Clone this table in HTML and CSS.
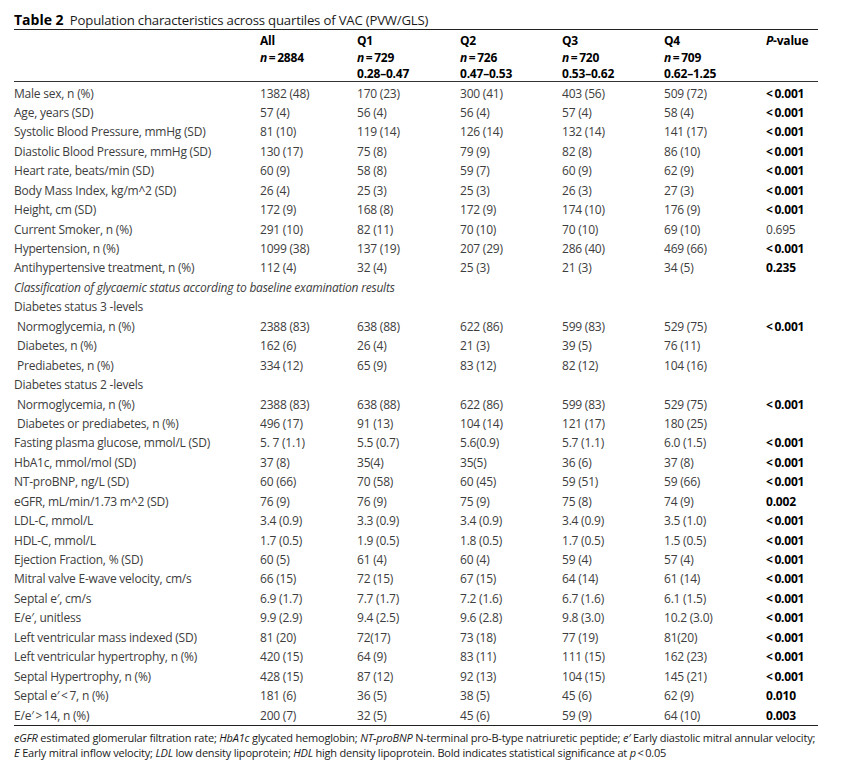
FILE: index.html
```html
<!DOCTYPE html>
<html lang="en">
<head>
<meta charset="utf-8">
<title>Table 2</title>
<link rel="stylesheet" href="styles.css">
</head>
<body>
<div class="page">
  <div class="caption"><b>Table 2</b> Population characteristics across quartiles of VAC (PVW/GLS)</div>
  <div class="table">
    <div class="row head">
      <div></div>
      <div>All<br><i>n</i>&#8201;=&#8201;2884</div>
      <div>Q1<br><i>n</i>&#8201;=&#8201;729<br>0.28&ndash;0.47</div>
      <div>Q2<br><i>n</i>&#8201;=&#8201;726<br>0.47&ndash;0.53</div>
      <div>Q3<br><i>n</i>&#8201;=&#8201;720<br>0.53&ndash;0.62</div>
      <div>Q4<br><i>n</i>&#8201;=&#8201;709<br>0.62&ndash;1.25</div>
      <div><i>P</i>-value</div>
    </div>
    <div class="body">
      <div class="row"><div>Male sex, n (%)</div><div>1382 (48)</div><div>170 (23)</div><div>300 (41)</div><div>403 (56)</div><div>509 (72)</div><div class="p">&lt;&#8201;0.001</div></div>
      <div class="row"><div>Age, years (SD)</div><div>57 (4)</div><div>56 (4)</div><div>56 (4)</div><div>57 (4)</div><div>58 (4)</div><div class="p">&lt;&#8201;0.001</div></div>
      <div class="row"><div>Systolic Blood Pressure, mmHg (SD)</div><div>81 (10)</div><div>119 (14)</div><div>126 (14)</div><div>132 (14)</div><div>141 (17)</div><div class="p">&lt;&#8201;0.001</div></div>
      <div class="row"><div>Diastolic Blood Pressure, mmHg (SD)</div><div>130 (17)</div><div>75 (8)</div><div>79 (9)</div><div>82 (8)</div><div>86 (10)</div><div class="p">&lt;&#8201;0.001</div></div>
      <div class="row"><div>Heart rate, beats/min (SD)</div><div>60 (9)</div><div>58 (8)</div><div>59 (7)</div><div>60 (9)</div><div>62 (9)</div><div class="p">&lt;&#8201;0.001</div></div>
      <div class="row"><div>Body Mass Index, kg/m^2 (SD)</div><div>26 (4)</div><div>25 (3)</div><div>25 (3)</div><div>26 (3)</div><div>27 (3)</div><div class="p">&lt;&#8201;0.001</div></div>
      <div class="row"><div>Height, cm (SD)</div><div>172 (9)</div><div>168 (8)</div><div>172 (9)</div><div>174 (10)</div><div>176 (9)</div><div class="p">&lt;&#8201;0.001</div></div>
      <div class="row"><div>Current Smoker, n (%)</div><div>291 (10)</div><div>82 (11)</div><div>70 (10)</div><div>70 (10)</div><div>69 (10)</div><div>0.695</div></div>
      <div class="row"><div>Hypertension, n (%)</div><div>1099 (38)</div><div>137 (19)</div><div>207 (29)</div><div>286 (40)</div><div>469 (66)</div><div class="p">&lt;&#8201;0.001</div></div>
      <div class="row"><div>Antihypertensive treatment, n (%)</div><div>112 (4)</div><div>32 (4)</div><div>25 (3)</div><div>21 (3)</div><div>34 (5)</div><div class="p">0.235</div></div>
      <div class="row"><div class="span"><i>Classification of glycaemic status according to baseline examination results</i></div></div>
      <div class="row"><div class="span">Diabetes status 3 -levels</div></div>
      <div class="row"><div class="ind">Normoglycemia, n (%)</div><div>2388 (83)</div><div>638 (88)</div><div>622 (86)</div><div>599 (83)</div><div>529 (75)</div><div class="p">&lt;&#8201;0.001</div></div>
      <div class="row"><div class="ind">Diabetes, n (%)</div><div>162 (6)</div><div>26 (4)</div><div>21 (3)</div><div>39 (5)</div><div>76 (11)</div><div></div></div>
      <div class="row"><div class="ind">Prediabetes, n (%)</div><div>334 (12)</div><div>65 (9)</div><div>83 (12)</div><div>82 (12)</div><div>104 (16)</div><div></div></div>
      <div class="row"><div class="span">Diabetes status 2 -levels</div></div>
      <div class="row"><div class="ind">Normoglycemia, n (%)</div><div>2388 (83)</div><div>638 (88)</div><div>622 (86)</div><div>599 (83)</div><div>529 (75)</div><div class="p">&lt;&#8201;0.001</div></div>
      <div class="row"><div class="ind">Diabetes or prediabetes, n (%)</div><div>496 (17)</div><div>91 (13)</div><div>104 (14)</div><div>121 (17)</div><div>180 (25)</div><div></div></div>
      <div class="row"><div>Fasting plasma glucose, mmol/L (SD)</div><div>5. 7 (1.1)</div><div>5.5 (0.7)</div><div>5.6(0.9)</div><div>5.7 (1.1)</div><div>6.0 (1.5)</div><div class="p">&lt;&#8201;0.001</div></div>
      <div class="row"><div>HbA1c, mmol/mol (SD)</div><div>37 (8)</div><div>35(4)</div><div>35(5)</div><div>36 (6)</div><div>37 (8)</div><div class="p">&lt;&#8201;0.001</div></div>
      <div class="row"><div>NT-proBNP, ng/L (SD)</div><div>60 (66)</div><div>70 (58)</div><div>60 (45)</div><div>59 (51)</div><div>59 (66)</div><div class="p">&lt;&#8201;0.001</div></div>
      <div class="row"><div>eGFR, mL/min/1.73 m^2 (SD)</div><div>76 (9)</div><div>76 (9)</div><div>75 (9)</div><div>75 (8)</div><div>74 (9)</div><div class="p">0.002</div></div>
      <div class="row"><div>LDL-C, mmol/L</div><div>3.4 (0.9)</div><div>3.3 (0.9)</div><div>3.4 (0.9)</div><div>3.4 (0.9)</div><div>3.5 (1.0)</div><div class="p">&lt;&#8201;0.001</div></div>
      <div class="row"><div>HDL-C, mmol/L</div><div>1.7 (0.5)</div><div>1.9 (0.5)</div><div>1.8 (0.5)</div><div>1.7 (0.5)</div><div>1.5 (0.5)</div><div class="p">&lt;&#8201;0.001</div></div>
      <div class="row"><div>Ejection Fraction, % (SD)</div><div>60 (5)</div><div>61 (4)</div><div>60 (4)</div><div>59 (4)</div><div>57 (4)</div><div class="p">&lt;&#8201;0.001</div></div>
      <div class="row"><div>Mitral valve E-wave velocity, cm/s</div><div>66 (15)</div><div>72 (15)</div><div>67 (15)</div><div>64 (14)</div><div>61 (14)</div><div class="p">&lt;&#8201;0.001</div></div>
      <div class="row"><div>Septal e&#8242;, cm/s</div><div>6.9 (1.7)</div><div>7.7 (1.7)</div><div>7.2 (1.6)</div><div>6.7 (1.6)</div><div>6.1 (1.5)</div><div class="p">&lt;&#8201;0.001</div></div>
      <div class="row"><div>E/e&#8242;, unitless</div><div>9.9 (2.9)</div><div>9.4 (2.5)</div><div>9.6 (2.8)</div><div>9.8 (3.0)</div><div>10.2 (3.0)</div><div class="p">&lt;&#8201;0.001</div></div>
      <div class="row"><div>Left ventricular mass indexed (SD)</div><div>81 (20)</div><div>72(17)</div><div>73 (18)</div><div>77 (19)</div><div>81(20)</div><div class="p">&lt;&#8201;0.001</div></div>
      <div class="row"><div>Left ventricular hypertrophy, n (%)</div><div>420 (15)</div><div>64 (9)</div><div>83 (11)</div><div>111 (15)</div><div>162 (23)</div><div class="p">&lt;&#8201;0.001</div></div>
      <div class="row"><div>Septal Hypertrophy, n (%)</div><div>428 (15)</div><div>87 (12)</div><div>92 (13)</div><div>104 (15)</div><div>145 (21)</div><div class="p">&lt;&#8201;0.001</div></div>
      <div class="row"><div>Septal e&#8242;&#8201;&lt;&#8201;7, n (%)</div><div>181 (6)</div><div>36 (5)</div><div>38 (5)</div><div>45 (6)</div><div>62 (9)</div><div class="p">0.010</div></div>
      <div class="row"><div>E/e&#8242;&#8201;&gt;&#8201;14, n (%)</div><div>200 (7)</div><div>32 (5)</div><div>45 (6)</div><div>59 (9)</div><div>64 (10)</div><div class="p">0.003</div></div>
    </div>
  </div>
  <div class="foot">
    <p><i>eGFR</i> estimated glomerular filtration rate; <i>HbA1c</i> glycated hemoglobin; <i>NT-proBNP</i> N-terminal pro-B-type natriuretic peptide; <i>e&#8242;</i> Early diastolic mitral annular velocity;</p>
    <p><i>E</i> Early mitral inflow velocity; <i>LDL</i> low density lipoprotein; <i>HDL</i> high density lipoprotein. Bold indicates statistical significance at <i>p</i>&#8201;&lt;&#8201;0.05</p>
  </div>
</div>
</body>
</html>
```

FILE: styles.css
```css
html, body {
  margin: 0;
  padding: 0;
  background: #ffffff;
}

.page {
  width: 804px;
  padding: 11px 0 0 14px;
  font-family: "Open Sans", "Noto Sans", sans-serif;
  color: #3d3d3d;
}

.caption {
  font-size: 13.2px;
  line-height: 18px;
  height: 18px;
  color: #1a1a1a;
  white-space: nowrap;
  letter-spacing: -0.2px;
}

.caption b {
  font-size: 14px;
  font-weight: 700;
  letter-spacing: 0;
  color: #000;
  margin-right: 3px;
}

.table {
  border-top: 1px solid #222;
  border-bottom: 1px solid #222;
}

.row {
  display: grid;
  grid-template-columns: 246px 97px 103px 102px 102px 102px 52px;
  font-size: 12px;
  letter-spacing: -0.22px;
  white-space: nowrap;
}

.row.head {
  height: 52px;
  padding-top: 3px;
  box-sizing: border-box;
  line-height: 16.5px;
  font-weight: 700;
  color: #000;
  border-bottom: 1px solid #333;
}

.body {
  padding-top: 1.5px;
}

.body .row {
  height: 19.45px;
  line-height: 19.45px;
}

.body .row > .span {
  grid-column: 1 / -1;
}

.body .row > .ind {
  padding-left: 3px;
}

.p {
  font-weight: 700;
  color: #000;
}

.foot {
  padding-top: 4px;
  font-size: 11px;
  line-height: 15px;
  letter-spacing: -0.2px;
  color: #1a1a1a;
  white-space: nowrap;
}

.foot p {
  margin: 0;
}
```
